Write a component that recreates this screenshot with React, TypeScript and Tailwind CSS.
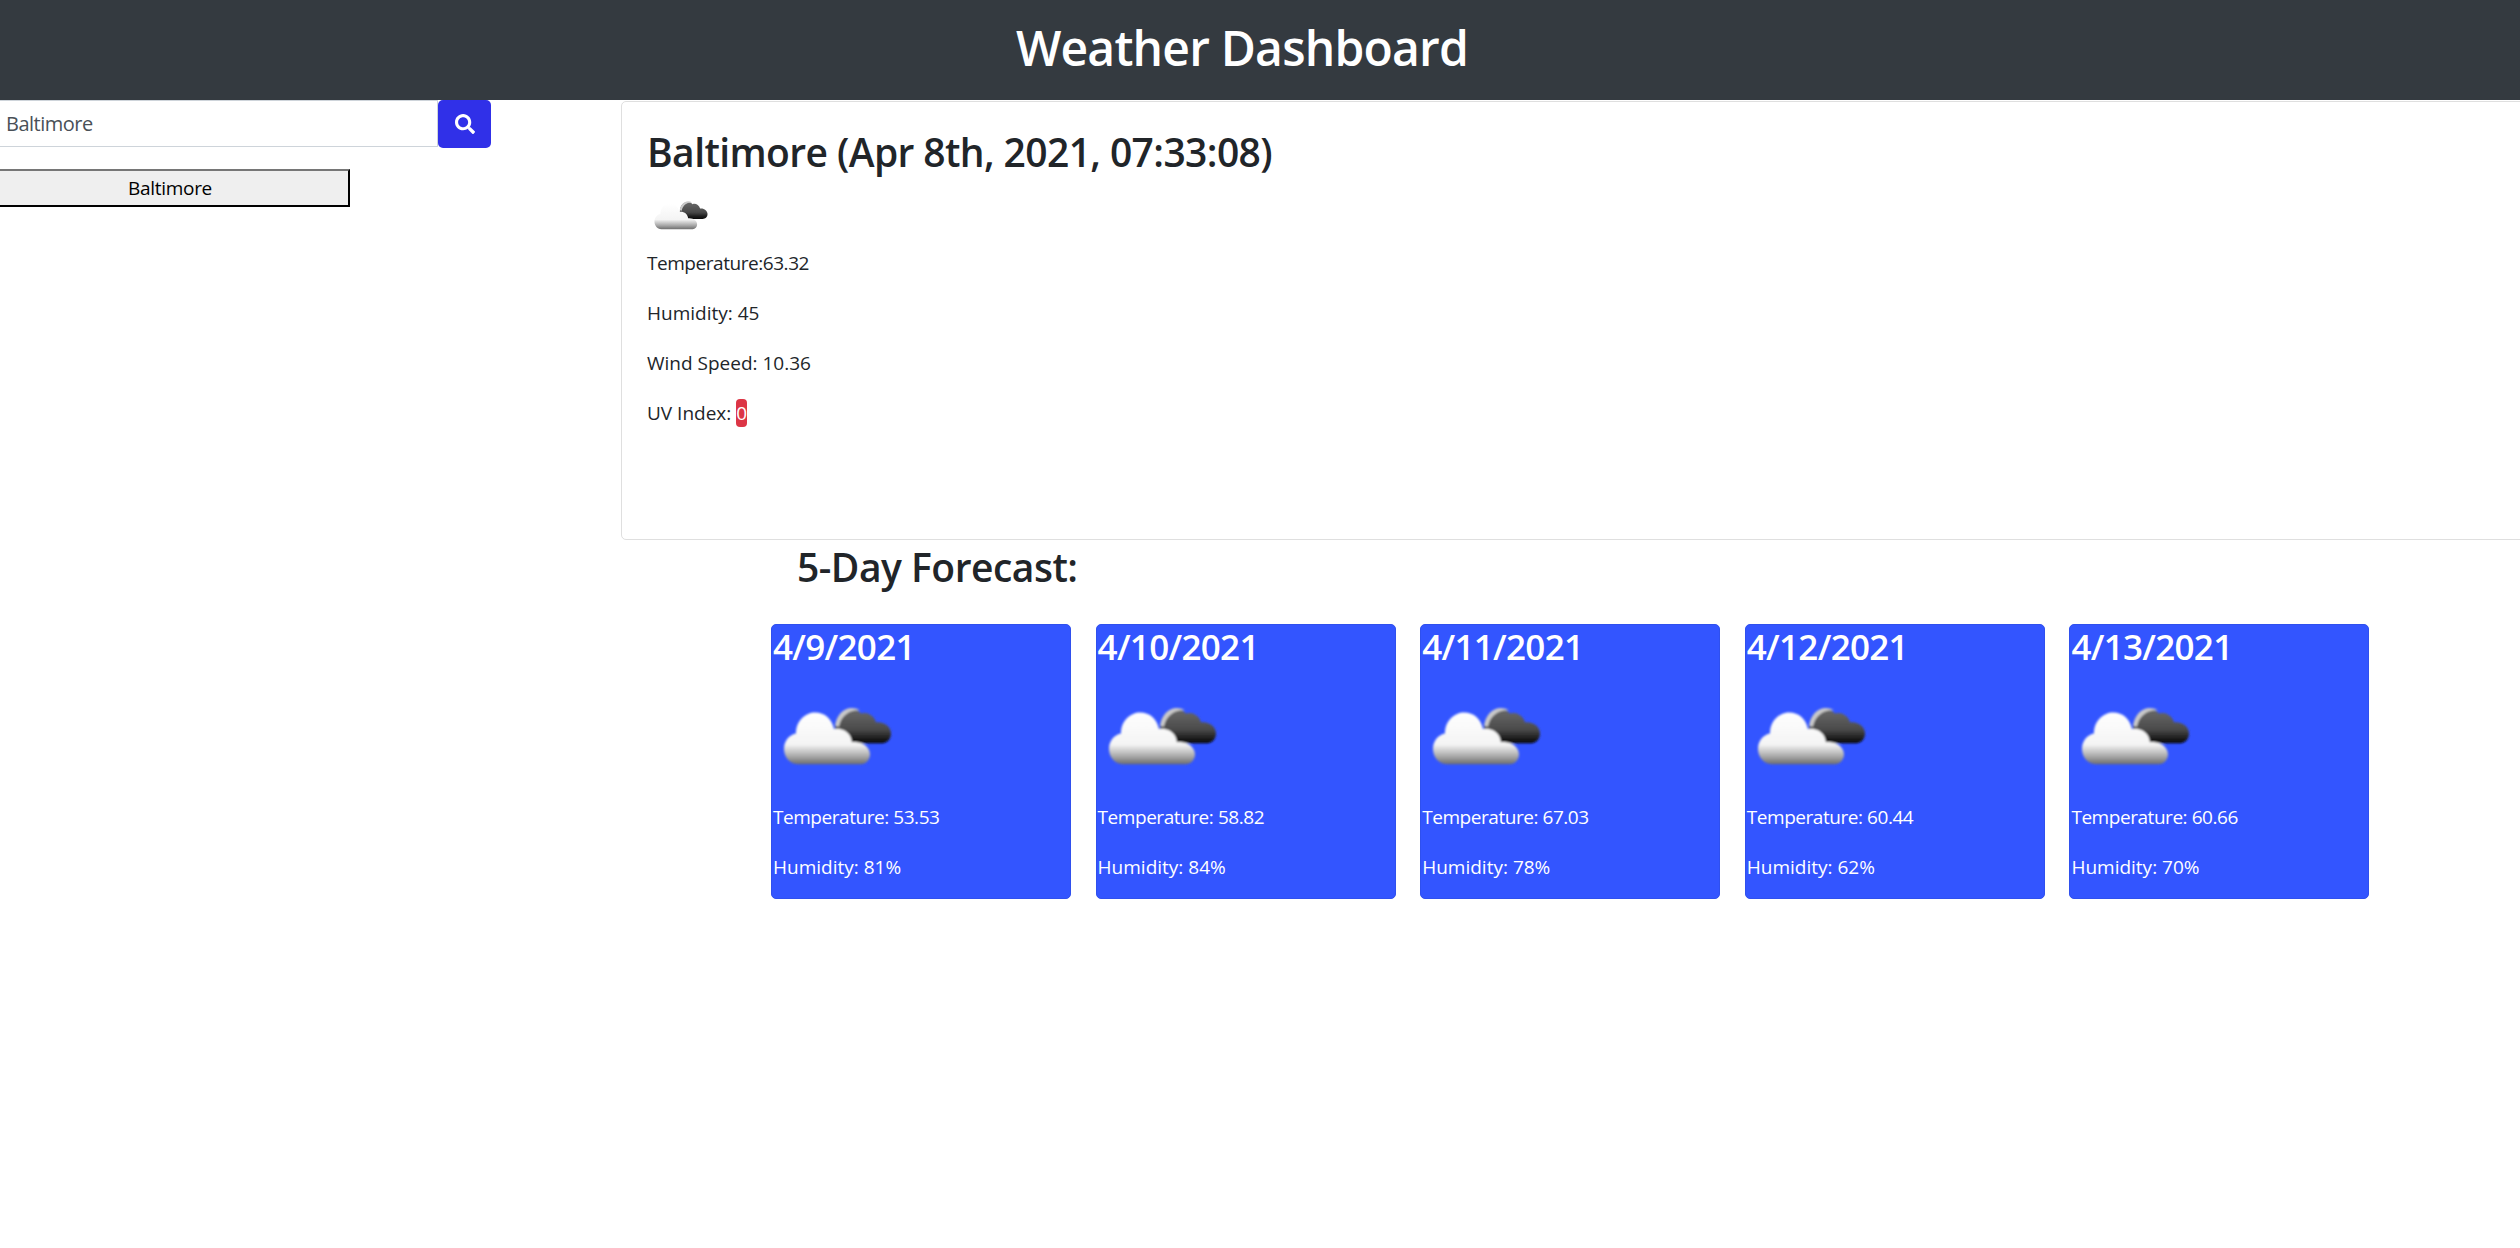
import { FaSearch } from "react-icons/fa";

const forecast = [
  { date: "4/9/2021", temp: "53.53", humidity: "81%" },
  { date: "4/10/2021", temp: "58.82", humidity: "84%" },
  { date: "4/11/2021", temp: "67.03", humidity: "78%" },
  { date: "4/12/2021", temp: "60.44", humidity: "62%" },
  { date: "4/13/2021", temp: "60.66", humidity: "70%" },
];

// broken clouds icon
function CloudIcon({ id, className }: { id: string; className: string }) {
  return (
    <svg viewBox="0 0 125 125" className={className}>
      <defs>
        <linearGradient id={`${id}-dark`} x1="0" y1="0" x2="0" y2="1">
          <stop offset="0" stopColor="#6a6a6a" />
          <stop offset="0.6" stopColor="#4a4a4a" />
          <stop offset="1" stopColor="#050505" />
        </linearGradient>
        <linearGradient id={`${id}-light`} x1="0" y1="0" x2="0" y2="1">
          <stop offset="0" stopColor="#ffffff" />
          <stop offset="0.62" stopColor="#f4f4f4" />
          <stop offset="0.85" stopColor="#a8a8a8" />
          <stop offset="1" stopColor="#6e6e6e" />
        </linearGradient>
        <filter id={`${id}-blur`} x="-10%" y="-10%" width="120%" height="120%">
          <feGaussianBlur stdDeviation="0.9" />
        </filter>
      </defs>
      <g filter={`url(#${id}-blur)`} transform="translate(0 -3) scale(1 1.1)">
        <path
          d="M63 44 C66 32 80 28 88 36 C93 34 101 37 103 44 C111 43 118 48 118 54 C118 60 113 63 108 63 L78 63 L62 50 Z"
          fill={`url(#${id}-dark)`}
        />
        <path d="M62 47 C64 34 76 27 87 33 C78 32 68 37 66 48 Z" fill="#c9c9c9" />
        <path
          d="M25 82 C16 82 11 75 11 68 C11 60 17 55 23 54 C23 42 33 35 42 35 C52 35 59 41 61 50 C71 49 78 54 79 62 C90 61 97 67 97 73 C97 78 93 82 88 82 Z"
          fill={`url(#${id}-light)`}
        />
      </g>
    </svg>
  );
}

export default function App() {
  return (
    <div className="h-[1248px] w-full overflow-hidden bg-white font-['Open_Sans',sans-serif] text-[19px] leading-[30px] text-[#212529]">
      <header className="flex h-[100px] items-center justify-center bg-[#343a40] pb-[5px] pr-[36px]">
        <h1 className="text-[48px] font-semibold leading-[60px] tracking-[-0.8px] text-white">Weather Dashboard</h1>
      </header>

      <div className="flex">
        <aside className="w-[621px] shrink-0">
          <div className="-ml-[10px] flex w-[501px]">
            <input
              readOnly
              value="Baltimore"
              className="h-[47px] flex-1 border border-[#ced4da] bg-white px-[15px] text-[20px] text-[#495057] tracking-[-0.5px] outline-none"
            />
            <button className="flex h-[48px] w-[53px] items-center justify-center rounded-[5px] bg-[#3030e8] text-white">
              <FaSearch className="h-[20px] w-[20px]" />
            </button>
          </div>
          <button className="-ml-[10px] mt-[21px] block h-[38px] w-[360px] border-2 border-b-black border-l-[#767676] border-r-black border-t-[#767676] bg-[#efefef] tracking-[-0.3px] text-black">
            Baltimore
          </button>
        </aside>

        <main className="-mr-[20px] mt-px h-[439px] flex-1 rounded-[5px] border border-[#dfdfdf] px-[25px] pb-[25px] pt-[26px]">
          <h2 className="mb-[10px] text-[39px] font-semibold leading-[48px] tracking-[-0.6px]">
            Baltimore (Apr 8th, 2021, 07:33:08)
          </h2>
          <CloudIcon id="main" className="ml-[2px] h-[62px] w-[62px]" />
          <p className="mb-[20px] tracking-[-0.45px]">Temperature:63.32</p>
          <p className="mb-[20px]">Humidity: 45</p>
          <p className="mb-[20px]">Wind Speed: 10.36</p>
          <p>
            UV Index: <span className="rounded-[4px] bg-[#dc3545] py-px text-white">0</span>
          </p>
        </main>
      </div>

      <h2 className="ml-[797px] text-[39px] font-semibold leading-[54px] tracking-[-0.5px]">5-Day Forecast:</h2>

      <div className="ml-[771px] mt-[30px] flex gap-[24.6px]">
        {forecast.map((day) => (
          <div key={day.date} className="h-[275px] w-[300px] rounded-[5px] border border-[#2f50ee] bg-[#3355ff] px-px text-white">
            <h3 className="mb-[9px] pt-px text-[35px] font-semibold leading-[42px] tracking-[-0.7px]">{day.date}</h3>
            <CloudIcon id={day.date} className="h-[125px] w-[125px]" />
            <p className="mb-[20px] tracking-[-0.45px]">Temperature: {day.temp}</p>
            <p>Humidity: {day.humidity}</p>
          </div>
        ))}
      </div>
    </div>
  );
}
